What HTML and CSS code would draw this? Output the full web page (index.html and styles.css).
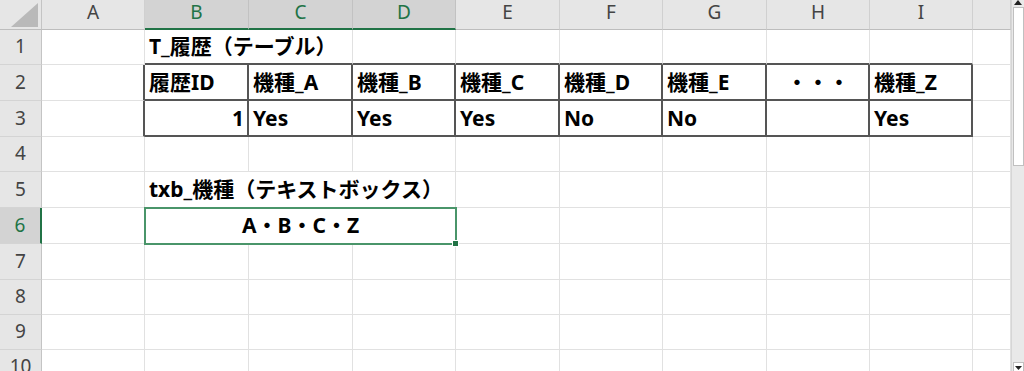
FILE: index.html
```html
<!DOCTYPE html>
<html lang="ja">
<head>
  <meta charset="UTF-8">
  <meta name="viewport" content="width=device-width, initial-scale=1.0">
  <title>履歴 - Excel</title>
  <link rel="stylesheet" href="styles.css">
</head>
<body>
  <div class="window">
    <div class="sheet">
      <!-- column headers -->
      <div class="corner">
        <svg width="41" height="29" viewBox="0 0 41 29"><polygon points="11,27 38,27 38,3" fill="#b9b9b9"/></svg>
      </div>
      <div class="ch">A</div>
      <div class="ch sel">B</div>
      <div class="ch sel">C</div>
      <div class="ch sel">D</div>
      <div class="ch">E</div>
      <div class="ch">F</div>
      <div class="ch">G</div>
      <div class="ch">H</div>
      <div class="ch">I</div>
      <div class="ch"></div>

      <!-- row 1 -->
      <div class="rh">1</div>
      <div class="c"></div>
      <div class="c tt span2">T_履歴（テーブル）</div>
      <div class="c tt"></div>
      <div class="c tt"></div>
      <div class="c tt"></div>
      <div class="c tt"></div>
      <div class="c tt"></div>
      <div class="c tt"></div>
      <div class="c"></div>

      <!-- row 2 : table header -->
      <div class="rh">2</div>
      <div class="c tl"></div>
      <div class="c t">履歴ID</div>
      <div class="c t">機種_A</div>
      <div class="c t">機種_B</div>
      <div class="c t">機種_C</div>
      <div class="c t">機種_D</div>
      <div class="c t">機種_E</div>
      <div class="c t ctr">・・・</div>
      <div class="c t">機種_Z</div>
      <div class="c"></div>

      <!-- row 3 : table data -->
      <div class="rh">3</div>
      <div class="c tl"></div>
      <div class="c t num">1</div>
      <div class="c t">Yes</div>
      <div class="c t">Yes</div>
      <div class="c t">Yes</div>
      <div class="c t">No</div>
      <div class="c t">No</div>
      <div class="c t"></div>
      <div class="c t">Yes</div>
      <div class="c"></div>

      <!-- row 4 -->
      <div class="rh">4</div>
      <div class="c"></div><div class="c"></div><div class="c"></div><div class="c"></div><div class="c"></div>
      <div class="c"></div><div class="c"></div><div class="c"></div><div class="c"></div><div class="c"></div>

      <!-- row 5 -->
      <div class="rh">5</div>
      <div class="c"></div>
      <div class="c span3">txb_機種（テキストボックス）</div>
      <div class="c"></div><div class="c"></div><div class="c"></div><div class="c"></div><div class="c"></div>
      <div class="c"></div>

      <!-- row 6 : merged B6:D6, selected -->
      <div class="rh sel">6</div>
      <div class="c"></div>
      <div class="c span3 ctr active">A・B・C・Z<span class="handle"></span></div>
      <div class="c"></div><div class="c"></div><div class="c"></div><div class="c"></div><div class="c"></div>
      <div class="c"></div>

      <!-- rows 7-10 -->
      <div class="rh">7</div>
      <div class="c"></div><div class="c"></div><div class="c"></div><div class="c"></div><div class="c"></div>
      <div class="c"></div><div class="c"></div><div class="c"></div><div class="c"></div><div class="c"></div>

      <div class="rh">8</div>
      <div class="c"></div><div class="c"></div><div class="c"></div><div class="c"></div><div class="c"></div>
      <div class="c"></div><div class="c"></div><div class="c"></div><div class="c"></div><div class="c"></div>

      <div class="rh">9</div>
      <div class="c"></div><div class="c"></div><div class="c"></div><div class="c"></div><div class="c"></div>
      <div class="c"></div><div class="c"></div><div class="c"></div><div class="c"></div><div class="c"></div>

      <div class="rh">10</div>
      <div class="c"></div><div class="c"></div><div class="c"></div><div class="c"></div><div class="c"></div>
      <div class="c"></div><div class="c"></div><div class="c"></div><div class="c"></div><div class="c"></div>
    </div>

    <!-- vertical scrollbar -->
    <div class="vscroll">
      <svg class="arrow" width="8" height="5" viewBox="0 0 8 5"><polygon points="0,5 8,5 4,0" fill="#222"/></svg>
      <div class="thumb"></div>
      <div class="track"></div>
      <div class="btn-down">
        <svg width="7" height="4" viewBox="0 0 7 4"><polygon points="0,0 7,0 3.5,4" fill="#222"/></svg>
      </div>
    </div>
  </div>
</body>
</html>
```

FILE: styles.css
```css
body {
  margin: 0;
  background: #fff;
  font-family: "Noto Sans", "Noto Sans CJK JP", sans-serif;
  overflow: hidden;
}
.window {
  display: flex;
  height: 371px;
  overflow: hidden;
}
.sheet {
  flex: none;
  width: 1011px;
  display: grid;
  grid-template-columns: 42px 103px 104px 104px 103px 104px 103px 104px 103px 103px 38px;
  grid-template-rows: 30px 35px 36px 36px 35px 36px 36px 36px 35px 35px 35px;
}
.sheet > div {
  box-sizing: border-box;
  display: flex;
  align-items: flex-end;
  white-space: nowrap;
}

/* headers */
.corner {
  background: #e6e6e6;
  border-right: 1px solid #c4c4c4;
  border-bottom: 1px solid #bdbdbd;
}
.ch {
  justify-content: center;
  background: #e6e6e6;
  color: #444;
  font-size: 19px;
  line-height: 19px;
  padding-bottom: 7px;
  border-right: 1px solid #d0d0d0;
  border-bottom: 1px solid #bdbdbd;
}
.ch.sel {
  background: #d3d3d3;
  color: #217346;
  border-right-color: #c2c2c2;
  border-bottom: 2px solid #217346;
  padding-bottom: 6px;
}
.rh {
  justify-content: center;
  background: #e6e6e6;
  color: #444;
  font-size: 19px;
  line-height: 19px;
  padding-bottom: 8px;
  border-right: 1px solid #c4c4c4;
  border-bottom: 1px solid #d4d4d4;
}
.rh.sel {
  background: #d3d3d3;
  color: #217346;
  border-right: 2px solid #217346;
}

/* cells */
.c {
  color: #000;
  font-weight: 700;
  font-size: 21px;
  line-height: 21px;
  padding: 0 3px 7px 4px;
  border-right: 1px solid #e1e1e1;
  border-bottom: 1px solid #e1e1e1;
}
.c.tt {
  border-bottom: 2px solid #555;
  padding-bottom: 6px;
}
.c.tl {
  border-right: 2px solid #555;
}
.c.t {
  border-right: 2px solid #555;
  border-bottom: 2px solid #555;
  padding-bottom: 6px;
}
.num {
  justify-content: flex-end;
}
.ctr {
  justify-content: center;
}
.span2 {
  grid-column: span 2;
}
.span3 {
  grid-column: span 3;
}
.active {
  position: relative;
  z-index: 1;
  outline: 2px solid #4a956a;
  outline-offset: -1px;
}
.handle {
  position: absolute;
  right: -4px;
  bottom: -4px;
  width: 5px;
  height: 5px;
  background: #217346;
  border: 1px solid #fff;
}

/* scrollbar */
.vscroll {
  flex: 1;
  display: flex;
  flex-direction: column;
  align-items: center;
  background: #e9e9e9;
  border-left: 1px solid #d6d6d6;
}
.arrow {
  flex: none;
}
.thumb {
  flex: none;
  box-sizing: border-box;
  width: 11px;
  height: 159px;
  margin-top: 2px;
  background: #fff;
  border: 1px solid #c0c0c0;
}
.track {
  flex: 1;
}
.btn-down {
  flex: none;
  box-sizing: border-box;
  width: 11px;
  height: 9px;
  display: flex;
  justify-content: center;
  padding-top: 3px;
  background: #fff;
  border: 1px solid #c0c0c0;
  border-bottom: none;
}
```
